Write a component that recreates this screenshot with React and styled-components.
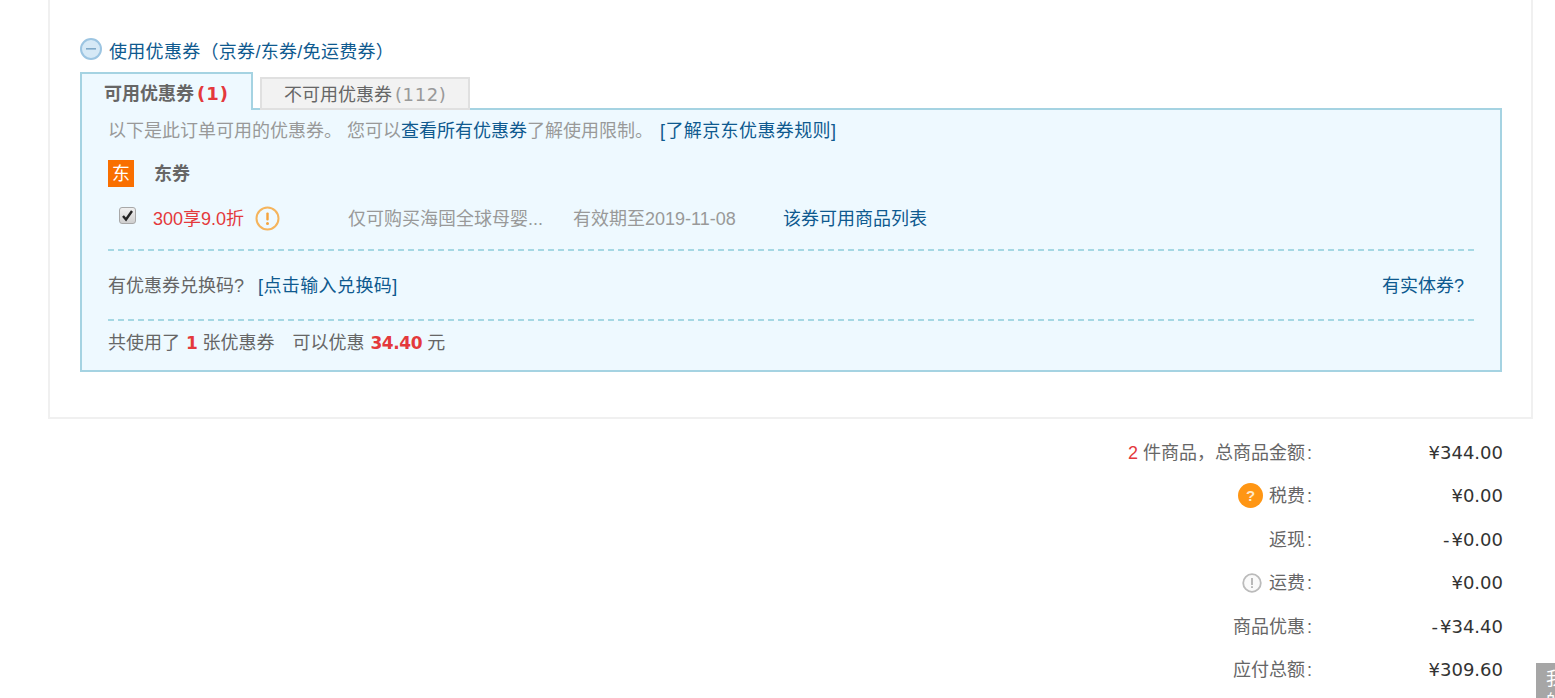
import styled, { createGlobalStyle } from "styled-components";

const GlobalStyle = createGlobalStyle`
  html, body {
    margin: 0;
    height: 100%;
    overflow: hidden;
    background: #fff;
  }
  body {
    font-family: "Liberation Sans", "Noto Sans CJK SC", sans-serif;
    font-size: 18px;
    color: #666;
  }
  * { box-sizing: border-box; }
`;

const Page = styled.div`
  width: 1555px;
  height: 698px;
  overflow: hidden;
  position: relative;
`;

const Card = styled.section`
  width: 1485px;
  height: 419px;
  margin-left: 48px;
  padding: 38px 30px 0 30px;
  border: 2px solid #f0f0f0;
  border-top: none;
`;

const Heading = styled.div`
  display: flex;
  align-items: flex-start;
  gap: 7px;
  height: 24px;
  color: #0f5a8f;
  line-height: 28px;
  letter-spacing: 0.3px;
`;

const Tabs = styled.div`
  display: flex;
  align-items: flex-end;
  gap: 7px;
  height: 38px;
  margin-top: 10px;
  position: relative;
  z-index: 1;
  margin-bottom: -2px;
`;

const Tab = styled.div`
  height: ${(p) => (p.$active ? "38px" : "33px")};
  width: ${(p) => (p.$active ? "173px" : "210px")};
  padding-left: 22px;
  line-height: ${(p) => (p.$active ? "40px" : "31px")};
  background: ${(p) => (p.$active ? "#eef9ff" : "#f2f2f2")};
  border: 2px solid ${(p) => (p.$active ? "#a5d3e2" : "#e0e0e0")};
  border-bottom: ${(p) => (p.$active ? "none" : undefined)};
  font-weight: ${(p) => (p.$active ? 700 : 400)};
  color: #666;
  white-space: nowrap;
`;

const TabCount = styled.span`
  font-family: "DejaVu Sans", sans-serif;
  font-size: 18px;
  letter-spacing: ${(p) => (p.$red ? "1px" : "0.6px")};
  font-weight: ${(p) => (p.$red ? 700 : 400)};
  color: ${(p) => (p.$red ? "#e4393c" : "#999")};
  margin-left: 3px;
`;

const Panel = styled.div`
  width: 1422px;
  height: 264px;
  padding: 8px 26px 0 26px;
  background: #eef9ff;
  border: 2px solid #a5d3e2;
`;

const Notice = styled.div`
  height: 26px;
  line-height: 26px;
  color: #999;
  white-space: nowrap;
`;

const Link = styled.a`
  color: #0f5a8f;
  letter-spacing: ${(p) => (p.$wide ? "0.4px" : "0")};
`;

const Gap = styled.span`
  display: inline-block;
  width: ${(p) => p.$w}px;
`;

const GroupTitle = styled.div`
  display: flex;
  align-items: center;
  gap: 20px;
  height: 28px;
  margin-top: 15px;
  font-weight: 700;
  color: #666;
`;

const GroupName = styled.span`
  margin-top: -2px;
`;

const GroupBadge = styled.span`
  width: 26px;
  height: 27px;
  line-height: 29px;
  text-align: center;
  background: #f96f00;
  color: #fff;
  font-weight: 400;
`;

const CouponRow = styled.div`
  display: flex;
  align-items: center;
  height: 32px;
  margin-top: 14px;
  padding-left: 11px;
  white-space: nowrap;
`;

const CheckBox = styled.span`
  flex: none;
  display: flex;
  align-items: center;
  justify-content: center;
  width: 17px;
  height: 17px;
  margin: -4px 17px 0 0;
  border: 1px solid #a8a8a8;
  border-radius: 3px;
  background: linear-gradient(#f0f0f0, #cfcfcf);
`;

const CouponName = styled.span`
  color: #e4393c;
  width: 102px;
  flex: none;
`;

const WarnIcon = styled.svg`
  width: 25px;
  height: 25px;
  flex: none;
  margin: 2px 68px 0 0;
`;

const Muted = styled.span`
  color: #999;
  flex: none;
  width: ${(p) => p.$w}px;
`;

const Divider = styled.div`
  border-top: 2px dashed #a5d8e4;
  margin-top: ${(p) => p.$top || 0}px;
`;

const CodeRow = styled.div`
  display: flex;
  justify-content: space-between;
  align-items: center;
  height: 68px;
  padding: 0 10px 2px 0;
`;

const TotalRow = styled.div`
  height: 44px;
  line-height: 45px;
  white-space: nowrap;
`;

const RedCount = styled.b`
  font-family: "DejaVu Sans", sans-serif;
  color: #e4393c;
  font-size: 17px;
  letter-spacing: -0.4px;
  margin: 0 ${(p) => p.$r}px 0 ${(p) => p.$l}px;
`;

const Summary = styled.div`
  width: 1503px;
  padding-top: 11.5px;
`;

const SummaryRow = styled.div`
  display: flex;
  justify-content: flex-end;
  align-items: center;
  height: 43.5px;
`;

const SummaryLabel = styled.span`
  display: flex;
  align-items: center;
  white-space: nowrap;
  color: #666;
  padding-right: 1px;
`;

const LabelText = styled.span`
  margin-top: -3px;
`;

const Colon = styled.span`
  padding-left: 2px;
`;

const SummaryValue = styled.span`
  width: 190px;
  text-align: right;
  font-family: "DejaVu Sans", sans-serif;
  color: #333;
`;

const Minus = styled.span`
  margin-right: 2px;
`;

const RedNum = styled.span`
  color: #e4393c;
  margin-right: 5px;
`;

const HelpDot = styled.span`
  width: 25px;
  height: 25px;
  margin-right: 6px;
  border-radius: 50%;
  background: #ff9614;
  color: #ffe9c9;
  font-size: 15px;
  font-weight: 700;
  line-height: 25px;
  text-align: center;
`;

const InfoIcon = styled.svg`
  width: 20px;
  height: 20px;
  margin-right: 7px;
`;

const SideTab = styled.div`
  position: absolute;
  left: 1536px;
  top: 663px;
  width: 19px;
  height: 35px;
  overflow: hidden;
  padding: 5px 0 0 10px;
  background: #a6a6a6;
  color: #fff;
  line-height: 23px;
  word-break: break-all;
`;

const SideText = styled.div`
  width: 18px;
`;

const CollapseIcon = () => (
  <svg width="22" height="22" viewBox="0 0 22 22">
    <circle cx="11" cy="11" r="10" fill="#d6e9f6" stroke="#9cc5e2" strokeWidth="2" />
    <rect x="6" y="10" width="10" height="1.6" fill="#7fa9c8" />
  </svg>
);

const rows = [
  { label: "税费", value: "¥0.00", icon: "help" },
  { label: "返现", value: "¥0.00", minus: true },
  { label: "运费", value: "¥0.00", icon: "info" },
  { label: "商品优惠", value: "¥34.40", minus: true },
  { label: "应付总额", value: "¥309.60" },
];

export default function App() {
  return (
    <Page>
      <GlobalStyle />
      <Card>
        <Heading>
          <CollapseIcon />
          <span>使用优惠券（京券/东券/免运费券）</span>
        </Heading>
        <Tabs>
          <Tab $active>
            可用优惠券<TabCount $red>(1)</TabCount>
          </Tab>
          <Tab>
            不可用优惠券<TabCount>(112)</TabCount>
          </Tab>
        </Tabs>
        <Panel>
          <Notice>
            以下是此订单可用的优惠券。<Gap $w={5} />您可以<Link>查看所有优惠券</Link>了解使用限制。
            <Gap $w={7} />
            <Link $wide>[了解京东优惠券规则]</Link>
          </Notice>
          <GroupTitle>
            <GroupBadge>东</GroupBadge>
            <GroupName>东券</GroupName>
          </GroupTitle>
          <CouponRow>
            <CheckBox>
              <svg width="13" height="13" viewBox="0 0 13 13">
                <path d="M2 7l3 3.5L11 2" fill="none" stroke="#222" strokeWidth="2.4" />
              </svg>
            </CheckBox>
            <CouponName>300享9.0折</CouponName>
            <WarnIcon viewBox="0 0 25 25">
              <circle cx="12.5" cy="12.5" r="11" fill="none" stroke="#f5b45c" strokeWidth="2" />
              <rect x="11.3" y="6.5" width="2.4" height="8" rx="1" fill="#f5a33c" />
              <circle cx="12.5" cy="17.5" r="1.5" fill="#f5a33c" />
            </WarnIcon>
            <Muted $w={225}>仅可购买海囤全球母婴...</Muted>
            <Muted $w={210}>有效期至2019-11-08</Muted>
            <Link>该券可用商品列表</Link>
          </CouponRow>
          <Divider $top={16} />
          <CodeRow>
            <span>
              有优惠券兑换码?<Gap $w={14} />
              <Link $wide>[点击输入兑换码]</Link>
            </span>
            <Link>有实体券?</Link>
          </CodeRow>
          <Divider />
          <TotalRow>
            共使用了<RedCount $l={6} $r={5}>1</RedCount>张优惠券<Gap $w={18} />可以优惠
            <RedCount $l={6} $r={5}>34.40</RedCount>元
          </TotalRow>
        </Panel>
      </Card>
      <Summary>
        <SummaryRow>
          <SummaryLabel>
            <LabelText>
              <RedNum>2</RedNum>件商品，总商品金额<Colon>:</Colon>
            </LabelText>
          </SummaryLabel>
          <SummaryValue>¥344.00</SummaryValue>
        </SummaryRow>
        {rows.map((row) => (
          <SummaryRow key={row.label}>
            <SummaryLabel>
              {row.icon === "help" && <HelpDot>?</HelpDot>}
              {row.icon === "info" && (
                <InfoIcon viewBox="0 0 20 20">
                  <circle cx="10" cy="10" r="8.8" fill="#fafafa" stroke="#bbb" strokeWidth="1.8" />
                  <rect x="9.2" y="5" width="1.6" height="7" fill="#aaa" />
                  <rect x="9.2" y="13.2" width="1.6" height="1.8" fill="#aaa" />
                </InfoIcon>
              )}
              <LabelText>
                {row.label}
                <Colon>:</Colon>
              </LabelText>
            </SummaryLabel>
            <SummaryValue>
              {row.minus && <Minus>-</Minus>}
              {row.value}
            </SummaryValue>
          </SummaryRow>
        ))}
      </Summary>
      <SideTab>
        <SideText>我的</SideText>
      </SideTab>
    </Page>
  );
}
